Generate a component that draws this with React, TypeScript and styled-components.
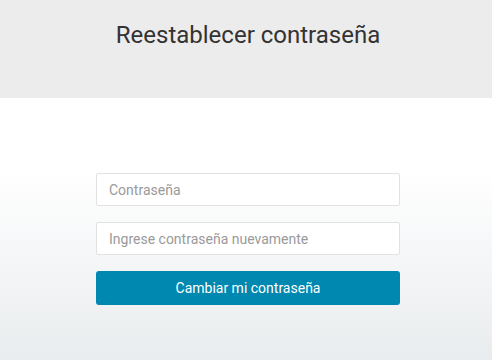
import React from "react";
import styled, { createGlobalStyle } from "styled-components";

const GlobalStyle = createGlobalStyle`
  html, body {
    margin: 0;
    padding: 0;
  }
  body {
    font-family: Roboto, "Liberation Sans", sans-serif;
    background: #ffffff;
  }
`;

const Page = styled.div`
  min-height: 360px;
  display: flex;
  flex-direction: column;
  background: linear-gradient(to bottom, #ffffff 98px, #ffffff 170px, #e9ecee 360px);
`;

const Header = styled.header`
  height: 98px;
  box-sizing: border-box;
  background-color: #ececec;
  padding-top: 21px;
  text-align: center;
`;

const Title = styled.h1`
  margin: 0;
  padding-left: 4px;
  font-size: 24px;
  line-height: 28px;
  font-weight: 400;
  color: #333333;
`;

const Body = styled.main`
  display: flex;
  justify-content: center;
  padding: 75px 0 0 4px;
`;

const Form = styled.form`
  width: 304px;
  display: flex;
  flex-direction: column;
  gap: 16px;
`;

const Input = styled.input`
  box-sizing: border-box;
  height: 33px;
  width: 100%;
  padding: 0 12px;
  border: 1px solid #e2e2e2;
  border-radius: 2px;
  background: #ffffff;
  font-family: Roboto, "Liberation Sans", sans-serif;
  font-size: 14px;
  color: #333333;
  outline: none;

  &::placeholder {
    color: #9a9a9a;
  }
`;

const SubmitButton = styled.button`
  height: 34px;
  width: 100%;
  border: none;
  border-radius: 3px;
  background-color: #0088b0;
  color: #ffffff;
  font-family: Roboto, "Liberation Sans", sans-serif;
  font-size: 14px;
  cursor: pointer;
`;

const App = () => {
  return (
    <>
      <GlobalStyle />
      <Page>
        <Header>
          <Title>Reestablecer contraseña</Title>
        </Header>
        <Body>
          <Form onSubmit={(e) => e.preventDefault()}>
            <Input type="password" placeholder="Contraseña" />
            <Input type="password" placeholder="Ingrese contraseña nuevamente" />
            <SubmitButton type="submit">Cambiar mi contraseña</SubmitButton>
          </Form>
        </Body>
      </Page>
    </>
  );
};

export default App;
